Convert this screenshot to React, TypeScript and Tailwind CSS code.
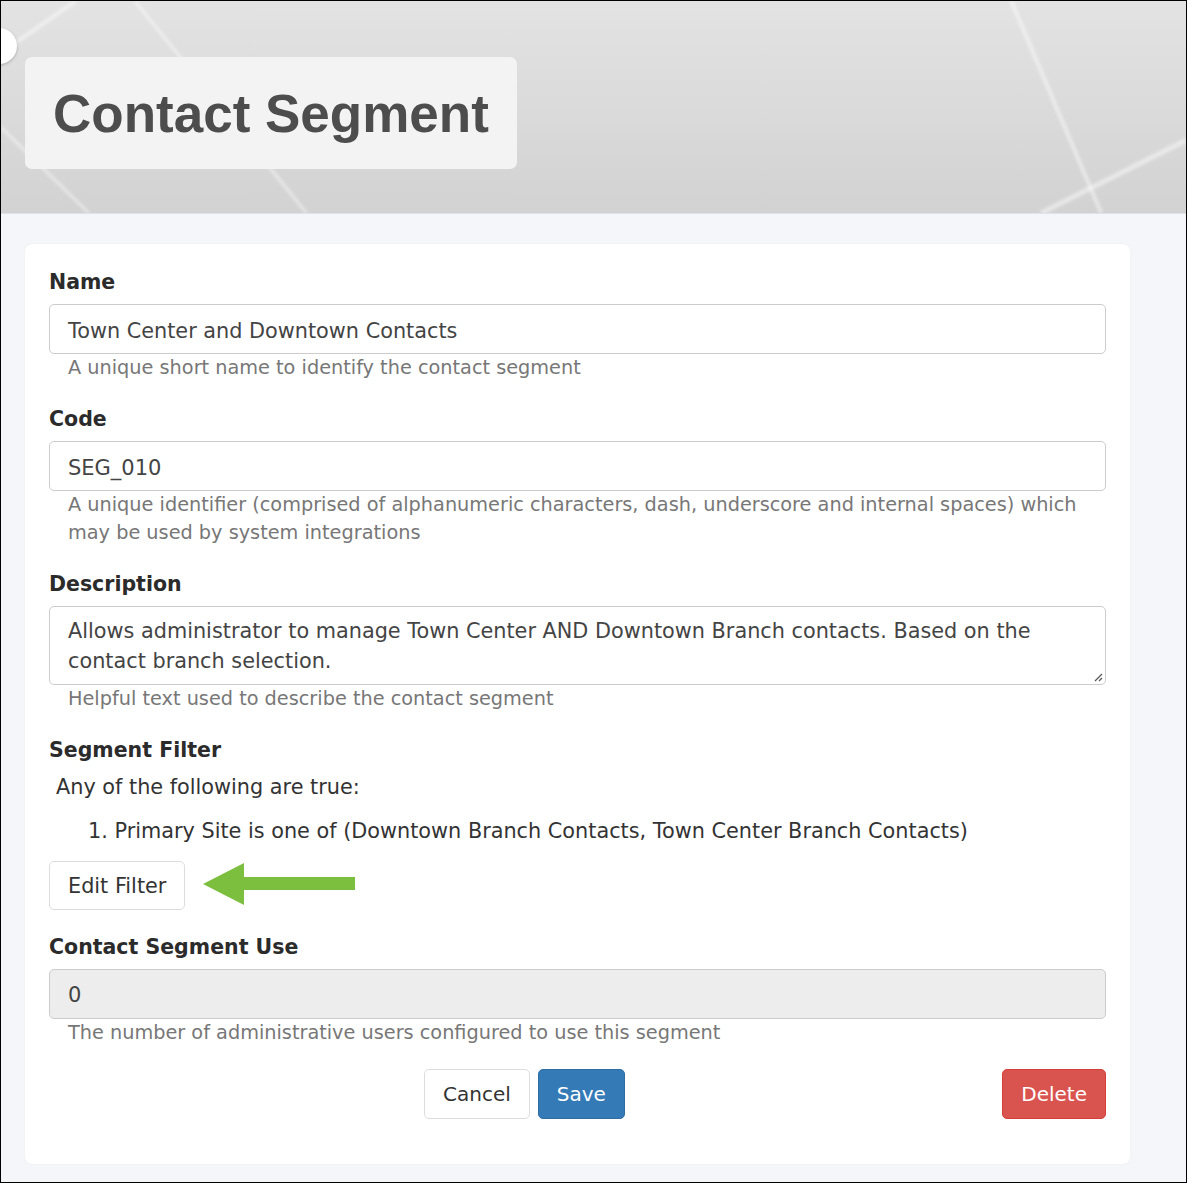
import React from 'react';

const body = { fontFamily: '"DejaVu Sans", Verdana, sans-serif' };

function Field({ label, children, help }: { label: string; children: React.ReactNode; help?: React.ReactNode }) {
  return (
    <div className="mb-[23px]">
      <div className="text-[20.5px] font-bold text-[#2b2b2b] leading-[28px] mb-[8px]">{label}</div>
      {children}
      {help && <div className="px-[19px] text-[19.3px] leading-[28px] text-[#777]">{help}</div>}
    </div>
  );
}

function HeaderLines() {
  return (
    <svg className="absolute inset-0 w-full h-full" viewBox="0 0 1187 213" preserveAspectRatio="none">
      <defs>
        <filter id="soft">
          <feGaussianBlur stdDeviation="1.4" />
        </filter>
      </defs>
      <g stroke="#ffffff" strokeOpacity="0.45" fill="none" filter="url(#soft)">
        <line x1="0" y1="52" x2="75" y2="0" strokeWidth="4" />
        <line x1="134" y1="0" x2="306" y2="213" strokeWidth="3" />
        <line x1="0" y1="127" x2="88" y2="213" strokeWidth="3" />
        <line x1="1012" y1="0" x2="1102" y2="213" strokeWidth="4" />
        <line x1="1042" y1="213" x2="1187" y2="140" strokeWidth="5" />
      </g>
    </svg>
  );
}

export default function App() {
  return (
    <div className="w-[1187px] h-[1183px] border border-black bg-[#f4f6fa] overflow-hidden relative" style={body}>
      <div className="relative h-[213px] bg-gradient-to-b from-[#e3e3e3] to-[#d2d2d2] border-b border-[#dde3ea] pt-[56px] pl-[24px]">
        <HeaderLines />
        <div className="absolute left-[-20px] top-[27px] w-[36px] h-[36px] rounded-full bg-white shadow-[0_1px_3px_rgba(0,0,0,0.25)]" />
        <div className="relative w-[492px] h-[112px] rounded-[7px] bg-[#f3f3f3] flex items-center pl-[28px]">
          <h1 className="text-[53px] font-bold text-[#4d4d4d] leading-none" style={{ fontFamily: '"Liberation Sans", Arial, sans-serif' }}>
            Contact Segment
          </h1>
        </div>
      </div>

      <div className="mx-[24px] mt-[30px] w-[1105px] rounded-[6px] bg-white px-[24px] pt-[24px] pb-[45px] shadow-[0_0_1px_rgba(0,0,0,0.15)]">
        <Field label="Name" help="A unique short name to identify the contact segment">
          <div className="h-[50px] border border-[#ccc] rounded-[5px] px-[18px] pt-[5px] flex items-center text-[20.8px] text-[#444]">
            Town Center and Downtown Contacts
          </div>
        </Field>

        <Field
          label="Code"
          help="A unique identifier (comprised of alphanumeric characters, dash, underscore and internal spaces) which may be used by system integrations"
        >
          <div className="h-[50px] border border-[#ccc] rounded-[5px] px-[18px] pt-[5px] flex items-center text-[21px] text-[#444]">
            SEG_010
          </div>
        </Field>

        <Field label="Description" help="Helpful text used to describe the contact segment">
          <div className="relative h-[79px] border border-[#ccc] rounded-[5px] px-[18px] pt-[9px] pr-[60px] text-[20.8px] leading-[30px] text-[#444]">
            Allows administrator to manage Town Center AND Downtown Branch contacts. Based on the contact branch selection.
            <svg className="absolute right-[2px] bottom-[2px]" width="10" height="10" viewBox="0 0 10 10">
              <path d="M9 2 L2 9 M9 6 L6 9" stroke="#555" strokeWidth="1.2" />
            </svg>
          </div>
        </Field>

        <div className="mb-[23px]">
          <div className="text-[20.5px] font-bold text-[#2b2b2b] leading-[28px]">Segment Filter</div>
          <div className="mt-[9px] pl-[7px] text-[20.8px] leading-[28px] text-[#333]">Any of the following are true:</div>
          <ol className="mt-[16px] pl-[39px] text-[20.8px] leading-[28px] text-[#333]">
            <li>1. Primary Site is one of (Downtown Branch Contacts, Town Center Branch Contacts)</li>
          </ol>
          <div className="mt-[16px] flex items-center">
            <button className="h-[49px] px-[18px] pt-[2px] border border-[#ddd] rounded-[5px] bg-white text-[20.8px] text-[#333]">
              Edit Filter
            </button>
            <svg className="ml-[18px] -mt-[4px]" width="152" height="42" viewBox="0 0 152 42">
              <path d="M0 21 L41 0 L41 14 L152 14 L152 27 L41 27 L41 42 Z" fill="#7cbf3f" />
            </svg>
          </div>
        </div>

        <Field label="Contact Segment Use" help="The number of administrative users configured to use this segment">
          <div className="h-[50px] border border-[#ccc] rounded-[5px] bg-[#ededed] px-[18px] pt-[4px] flex items-center text-[21px] text-[#444]">
            0
          </div>
        </Field>

        <div className="-mt-[1px] flex items-center">
          <div className="ml-[375px] flex gap-[8px]">
            <button className="h-[50px] px-[18px] border border-[#ddd] rounded-[5px] bg-white text-[20px] text-[#333]">Cancel</button>
            <button className="h-[50px] px-[18px] border border-[#2e6da4] rounded-[5px] bg-[#337ab7] text-[20px] text-white">Save</button>
          </div>
          <button className="ml-auto h-[50px] px-[18px] border border-[#d43f3a] rounded-[5px] bg-[#d9534f] text-[20px] text-white">Delete</button>
        </div>
      </div>
    </div>
  );
}
